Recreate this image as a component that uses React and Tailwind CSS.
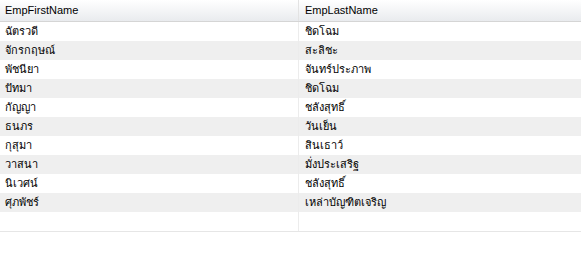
import React from 'react';

const rows = [
  ['ฉัตรวดี', 'ชิดโฉม'],
  ['จักรกฤษณ์', 'สะลิชะ'],
  ['พัชนียา', 'จันทร์ประภาพ'],
  ['ปัทมา', 'ชิดโฉม'],
  ['กัญญา', 'ชลังสุทธิ์'],
  ['ธนภร', 'วันเย็น'],
  ['กุสุมา', 'สินเธาว์'],
  ['วาสนา', 'มั่งประเสริฐ'],
  ['นิเวศน์', 'ชลังสุทธิ์'],
  ['ศุภพัชร์', 'เหล่าบัญฑิตเจริญ'],
];

const App = () => {
  return (
    <div className="w-[581px] h-[259px] bg-white text-[11px] leading-none text-black font-['Tahoma','Liberation_Sans','Noto_Sans',sans-serif]">
      {/* Header */}
      <div className="flex h-[22px] bg-gradient-to-b from-white to-[#e9ebee] border-b border-[#d5d5d5]">
        <div className="w-[299px] flex items-center pl-[5px] border-r border-[#e3e3e3]">EmpFirstName</div>
        <div className="flex-1 flex items-center pl-[6px]">EmpLastName</div>
      </div>

      {/* Rows */}
      {rows.map(([first, last], i) => (
        <div key={i} className={`flex h-[19px] ${i % 2 === 1 ? 'bg-[#efefef]' : 'bg-white'}`}>
          <div className="w-[299px] flex items-center pl-[5px] border-r border-[#ececec]">{first}</div>
          <div className="flex-1 flex items-center pl-[6px]">{last}</div>
        </div>
      ))}

      {/* Empty new row */}
      <div className="flex h-[20px] bg-white border-b border-[#e6e6e6]">
        <div className="w-[299px] border-r border-[#ececec]"></div>
        <div className="flex-1"></div>
      </div>
    </div>
  );
};

export default App;
